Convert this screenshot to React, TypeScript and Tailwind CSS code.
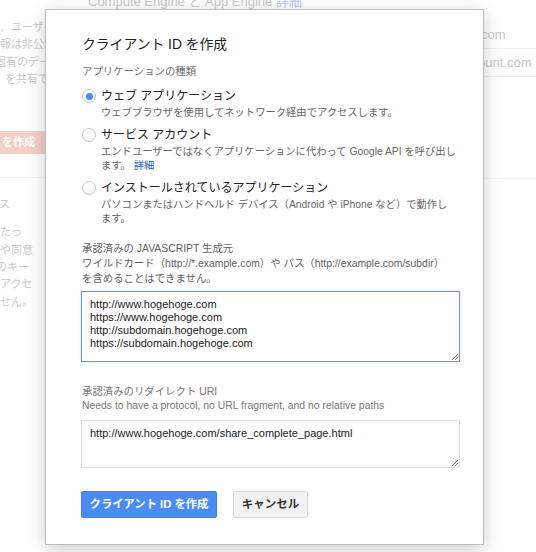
import React from 'react';

const font = { fontFamily: '"Liberation Sans", "Noto Sans CJK JP", sans-serif' };

/* ─── Radio option ─────────────────────────────────────────── */
function RadioOption({ checked, label, children }: { checked?: boolean; label: string; children: React.ReactNode }) {
  return (
    <div className="flex flex-col">
      <div className="flex items-center gap-[5px] h-[16px]">
        <span className="w-[14px] h-[14px] rounded-full border border-[#c8c8c8] bg-gradient-to-b from-white to-[#f4f4f4] flex items-center justify-center shrink-0">
          {checked && <span className="w-[7px] h-[7px] rounded-full bg-[#4a8df6]" />}
        </span>
        <span className="text-[12px] leading-[16px] text-[#222] whitespace-nowrap">{label}</span>
      </div>
      <div className="ml-[19px] mt-[2px] text-[10.3px] leading-[14px] text-[#666] whitespace-nowrap">{children}</div>
    </div>
  );
}

/* ─── Resize grip ──────────────────────────────────────────── */
function Grip() {
  return (
    <svg className="absolute right-[1px] bottom-[1px]" width="7" height="7" viewBox="0 0 7 7">
      <path d="M1 7 L7 1 M4 7 L7 4" stroke="#8a8a8a" strokeWidth="1" />
    </svg>
  );
}

/* ─── Multi-line field (text box look) ─────────────────────── */
function Field({ lines, className }: { lines: string[]; className: string }) {
  return (
    <div className={className}>
      {lines.map((l) => (
        <div key={l} className="whitespace-nowrap">{l}</div>
      ))}
      <Grip />
    </div>
  );
}

export default function App() {
  return (
    <div className="relative w-[536px] h-[552px] overflow-hidden bg-white" style={font}>
      {/* ── Faded page behind the dialog ── */}
      <div className="flex h-full text-[#c9c9c9]">
        <div className="w-[60px] shrink-0 overflow-hidden flex flex-col text-[11px] leading-[17.3px]">
          <div className="mt-[19px] whitespace-nowrap">、ユーザー</div>
          <div className="whitespace-nowrap">報は非公開</div>
          <div className="whitespace-nowrap -ml-[5px]">固有のデータ</div>
          <div className="whitespace-nowrap ml-[5px]">を共有で</div>
          <div className="mt-[43px] h-[23px] w-[60px] bg-[#f4cfc8] rounded-r-[2px] text-white font-bold text-[11px] leading-[23px] pl-[2px] whitespace-nowrap">を作成</div>
          <div className="mt-[23px] h-px bg-[#f3f3f3]" />
          <div className="mt-[18px] whitespace-nowrap -ml-[1px]">ス</div>
          <div className="mt-[11px] whitespace-nowrap">たっ</div>
          <div className="whitespace-nowrap">や同意</div>
          <div className="whitespace-nowrap -ml-[4px]">のキー</div>
          <div className="whitespace-nowrap">アクセ</div>
          <div className="whitespace-nowrap">せん。</div>
        </div>
        <div className="flex-1 overflow-hidden">
          <div className="-mt-[6px] ml-[28px] text-[13px] leading-[16px] whitespace-nowrap">
            Compute Engine と App Engine <span className="text-[#b9c8ee]">詳細</span>
          </div>
        </div>
        <div className="w-[56px] shrink-0 overflow-hidden flex flex-col text-[13px] text-[#c4c4c4]">
          <div className="mt-[26px] h-[22px] leading-[18px] pl-[1px] whitespace-nowrap">com</div>
          <div className="h-px bg-[#f0f0f0]" />
          <div className="h-[27px] leading-[28px] -ml-[2px] whitespace-nowrap">ount.com</div>
          <div className="h-px bg-[#f0f0f0]" />
          <div className="mt-[101px] h-px bg-[#f3f3f3]" />
        </div>
      </div>

      {/* ── Dialog ── */}
      <div className="absolute left-[45px] top-[9px] w-[439px] bg-white border border-[#bdbdbd] shadow-[0_4px_16px_rgba(0,0,0,0.2)] pl-[36px] pr-[23px] pt-[26px] pb-[26px]">
        <h1 className="text-[13.8px] leading-[18px] text-[#222] whitespace-nowrap">クライアント ID を作成</h1>

        <div className="mt-[11px] text-[10.4px] leading-[14px] text-[#707070]">アプリケーションの種類</div>

        <div className="mt-[9px] flex flex-col gap-[7px]">
          <RadioOption checked label="ウェブ アプリケーション">
            ウェブブラウザを使用してネットワーク経由でアクセスします。
          </RadioOption>
          <RadioOption label="サービス アカウント">
            エンドユーザーではなくアプリケーションに代わって Google API を呼び出し
            <br />
            ます。 <span className="text-[#2a5db0]">詳細</span>
          </RadioOption>
          <RadioOption label="インストールされているアプリケーション">
            パソコンまたはハンドヘルド デバイス（Android や iPhone など）で動作し
            <br />
            ます。
          </RadioOption>
        </div>

        <div className="mt-[15px] text-[10.4px] leading-[15px] text-[#5f5f5f] whitespace-nowrap">
          承認済みの JAVASCRIPT 生成元
          <br />
          ワイルドカード（http://*.example.com）や パス（http://example.com/subdir）
          <br />
          を含めることはできません。
        </div>

        <div className="mt-[5px]">
          <Field
            lines={['http://www.hogehoge.com', 'https://www.hogehoge.com', 'http://subdomain.hogehoge.com', 'https://subdomain.hogehoge.com']}
            className="relative w-[379px] h-[71px] -ml-px border border-solid border-[#5e9af5] shadow-[0_0_2px_rgba(77,144,254,0.35)] bg-white pl-[8px] pt-[6px] text-[11px] leading-[13px] text-[#222]"
          />
        </div>

        <div className="mt-[23px] text-[10.4px] leading-[14px] text-[#777] whitespace-nowrap">
          承認済みのリダイレクト URI
          <br />
          Needs to have a protocol, no URL fragment, and no relative paths
        </div>

        <div className="mt-[7px]">
          <Field
            lines={['http://www.hogehoge.com/share_complete_page.html']}
            className="relative w-[379px] h-[48px] -ml-px border border-solid border-[#e0e0e0] bg-white pl-[8px] pt-[6px] text-[11px] leading-[13px] text-[#222]"
          />
        </div>

        <div className="mt-[23px] flex gap-[16px]">
          <button className="h-[27px] w-[136px] -ml-px rounded-[2px] bg-[#4a8cf3] border border-[#3f80ec] text-white font-bold text-[11.3px] whitespace-nowrap" style={font}>
            クライアント ID を作成
          </button>
          <button className="h-[27px] w-[75px] rounded-[2px] bg-[#f2f2f2] border border-[#dcdcdc] text-[#333] font-bold text-[11.5px] whitespace-nowrap" style={font}>
            キャンセル
          </button>
        </div>
      </div>
    </div>
  );
}
